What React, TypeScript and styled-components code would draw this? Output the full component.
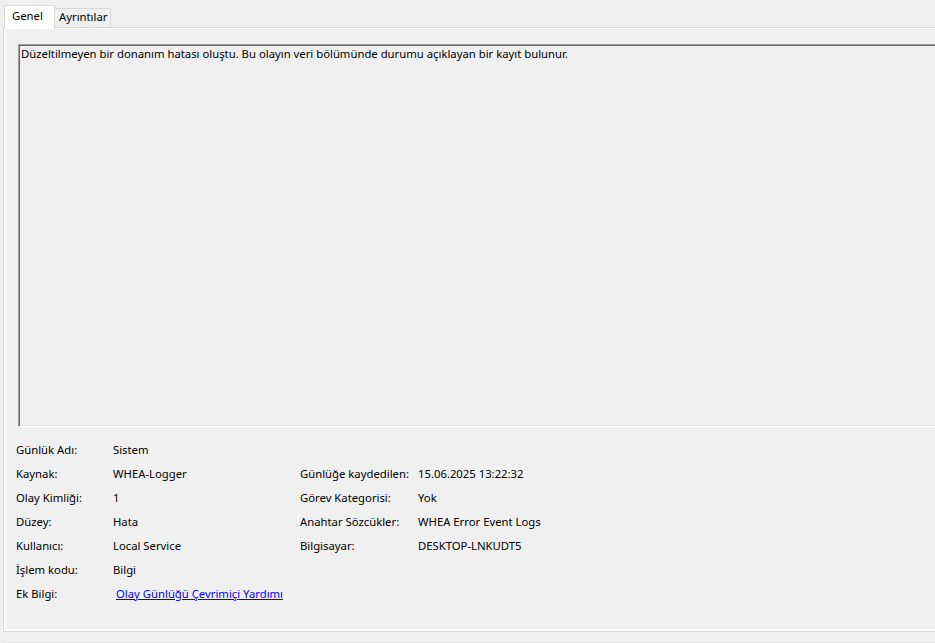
import React from "react";
import styled, { createGlobalStyle } from "styled-components";

const Global = createGlobalStyle`
  html, body {
    margin: 0;
    padding: 0;
    background: #f0f0f0;
    overflow: hidden;
  }
  body {
    font-family: "Noto Sans", "Segoe UI", "Liberation Sans", sans-serif;
    font-size: 11.3px;
    color: #000;
  }
`;

const Page = styled.div`
  width: 100vw;
  height: 643px;
  padding: 5px 0 0 3px;
  box-sizing: border-box;
  overflow: hidden;
`;

const TabStrip = styled.div`
  display: flex;
  align-items: flex-start;
  height: 22px;
  padding-left: 1px;
  position: relative;
  z-index: 1;
`;

const Tab = styled.div<{ $active?: boolean }>`
  box-sizing: border-box;
  line-height: 16px;
  white-space: nowrap;
  border-top: 1px solid #d9d9d9;
  border-right: 1px solid #d9d9d9;
  border-left: ${(p) => (p.$active ? "1px solid #d9d9d9" : "none")};
  background: ${(p) => (p.$active ? "#ffffff" : "#f0f0f0")};
  height: ${(p) => (p.$active ? "24px" : "19px")};
  width: ${(p) => (p.$active ? "51px" : "56px")};
  margin-top: ${(p) => (p.$active ? "0" : "3px")};
  padding: ${(p) => (p.$active ? "2px 0 0 7px" : "0 0 0 4px")};
`;

const Panel = styled.div`
  box-sizing: border-box;
  width: 960px;
  height: 605px;
  border: 1px solid #d9d9d9;
  background: #ffffff;
  padding: 1px 0 2px 2px;
`;

const PageBody = styled.div`
  height: 100%;
  background: #f0f0f0;
  padding: 15px 0 0 10px;
  box-sizing: border-box;
`;

const DescriptionBox = styled.div`
  box-sizing: border-box;
  margin-left: 2px;
  height: 383px;
  border-top: 1px solid #a0a0a0;
  border-left: 1px solid #a0a0a0;
  border-bottom: 1px solid #ffffff;
  border-right: 1px solid #ffffff;
  box-shadow: inset 1px 1px 0 #696969, inset -1px -1px 0 #e3e3e3;
  background: #f0f0f0;
  padding: 2px 2px 0 2px;
  line-height: 14px;
  white-space: nowrap;
`;

const InfoGrid = styled.div`
  display: grid;
  grid-template-columns: 97px 187px 118px 1fr;
  grid-auto-rows: 24px;
  line-height: 24px;
  margin-top: 11px;
  white-space: nowrap;
`;

const Cell = styled.div``;

const HelpLink = styled.a`
  color: #0000ff;
  text-decoration: underline;
  padding-left: 3px;
  cursor: pointer;
`;

const Footer = styled.div`
  width: 960px;
  margin-top: 10px;
  border-top: 1px solid #e3e3e3;
`;

type Row = [string, React.ReactNode, string?, string?];

const rows: Row[] = [
  ["Günlük Adı:", "Sistem"],
  ["Kaynak:", "WHEA-Logger", "Günlüğe kaydedilen:", "15.06.2025 13:22:32"],
  ["Olay Kimliği:", "1", "Görev Kategorisi:", "Yok"],
  ["Düzey:", "Hata", "Anahtar Sözcükler:", "WHEA Error Event Logs"],
  ["Kullanıcı:", "Local Service", "Bilgisayar:", "DESKTOP-LNKUDT5"],
  ["İşlem kodu:", "Bilgi"],
  ["Ek Bilgi:", <HelpLink>Olay Günlüğü Çevrimiçi Yardımı</HelpLink>],
];

export default function App() {
  return (
    <>
      <Global />
      <Page>
        <TabStrip>
          <Tab $active>Genel</Tab>
          <Tab>Ayrıntılar</Tab>
        </TabStrip>
        <Panel>
          <PageBody>
            <DescriptionBox>
              Düzeltilmeyen bir donanım hatası oluştu. Bu olayın veri bölümünde durumu açıklayan bir kayıt bulunur.
            </DescriptionBox>
            <InfoGrid>
              {rows.map((r, i) => (
                <React.Fragment key={i}>
                  <Cell>{r[0]}</Cell>
                  <Cell>{r[1]}</Cell>
                  <Cell>{r[2] ?? ""}</Cell>
                  <Cell>{r[3] ?? ""}</Cell>
                </React.Fragment>
              ))}
            </InfoGrid>
          </PageBody>
        </Panel>
        <Footer />
      </Page>
    </>
  );
}
